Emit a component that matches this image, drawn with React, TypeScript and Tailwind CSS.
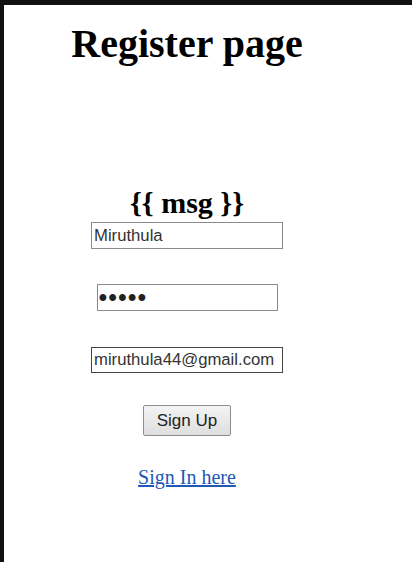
const App = () => {
  return (
    <div className="min-h-[562px] w-[412px] bg-white border-t-[5px] border-l-4 border-[#111] flex flex-row">
      <div className="w-[366px] flex flex-col items-center">
        <h1 className="mt-[16px] font-['Liberation_Serif',serif] font-bold text-[40px] leading-[46px] text-black">
          Register page
        </h1>
        <h2 className="mt-[119px] font-['Liberation_Serif',serif] font-bold text-[30px] leading-[34px] text-black">
          {"{{ msg }}"}
        </h2>
        <input
          type="text"
          readOnly
          value="Miruthula"
          className="mt-[2px] w-[192px] h-[27px] px-[2px] border border-[#8a8a8a] bg-white font-['Liberation_Sans',sans-serif] text-[16.7px] text-[#333] outline-none"
        />
        <input
          type="password"
          readOnly
          value="12345"
          className="mt-[35px] w-[181px] h-[27px] px-[1px] border border-[#8a8a8a] bg-white font-['Liberation_Sans',sans-serif] text-[25px] leading-[25px] tracking-[1px] text-[#222] outline-none"
        />
        <input
          type="email"
          readOnly
          value="miruthula44@gmail.com"
          className="mt-[36px] w-[192px] h-[26px] px-[2px] border border-[#444] bg-white font-['Liberation_Sans',sans-serif] text-[16.7px] text-[#333] outline-none"
        />
        <button className="mt-[32px] w-[88px] h-[31px] border border-[#8e8e8e] rounded-[2px] bg-gradient-to-b from-[#f4f4f4] to-[#dedede] font-['Liberation_Sans',sans-serif] text-[17px] text-[#222]">
          Sign Up
        </button>
        <a
          href="#"
          className="mt-[30px] font-['Liberation_Serif',serif] text-[20px] leading-[23px] text-[#2158b5] underline"
        >
          Sign In here
        </a>
      </div>
    </div>
  );
};

export default App;
